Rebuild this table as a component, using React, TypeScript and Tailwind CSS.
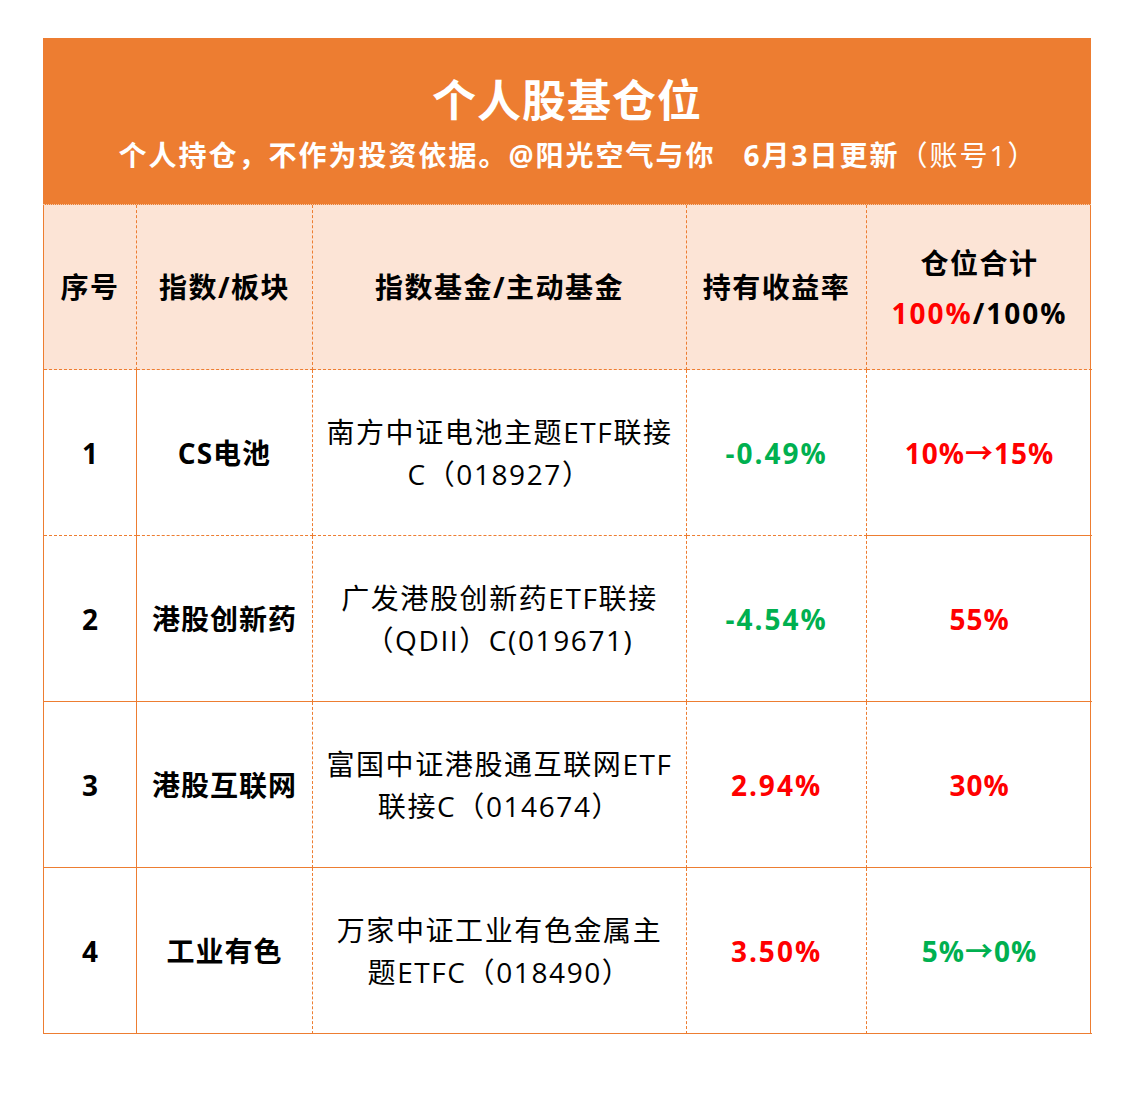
const font = { fontFamily: '"Open Sans", "Noto Sans CJK SC", sans-serif' };

const cols = "grid grid-cols-[93px_176px_374px_180px_225px]";

type Row = {
  no: string;
  sector: string;
  fund: [string, string];
  ret: string;
  retColor: string;
  pos: string;
  posColor: string;
  dashedBottom?: boolean;
};

const rows: Row[] = [
  {
    no: "1",
    sector: "CS电池",
    fund: ["南方中证电池主题ETF联接", "C（018927）"],
    ret: "-0.49%",
    retColor: "text-[#00b050]",
    pos: "10%→15%",
    posColor: "text-[#ff0000]",
    dashedBottom: true,
  },
  {
    no: "2",
    sector: "港股创新药",
    fund: ["广发港股创新药ETF联接", "（QDII）C(019671)"],
    ret: "-4.54%",
    retColor: "text-[#00b050]",
    pos: "55%",
    posColor: "text-[#ff0000]",
  },
  {
    no: "3",
    sector: "港股互联网",
    fund: ["富国中证港股通互联网ETF", "联接C（014674）"],
    ret: "2.94%",
    retColor: "text-[#ff0000]",
    pos: "30%",
    posColor: "text-[#ff0000]",
  },
  {
    no: "4",
    sector: "工业有色",
    fund: ["万家中证工业有色金属主", "题ETFC（018490）"],
    ret: "3.50%",
    retColor: "text-[#ff0000]",
    pos: "5%→0%",
    posColor: "text-[#00b050]",
  },
];

export default function App() {
  return (
    <div className="min-h-screen bg-white pt-[38px] pl-[43px]" style={font}>
      <div className="w-[1048px]">
        {/* Title block */}
        <div className="h-[167px] bg-[#ed7d31] flex flex-col items-center text-white font-bold border-b border-dotted border-[#f6c9a8]">
          <div className="text-[44px] leading-none mt-[40px] tracking-[1px]">个人股基仓位</div>
          <div className="text-[28px] leading-none mt-[19px] pl-[22px] whitespace-pre tracking-[2px]">
            个人持仓，不作为投资依据。@阳光空气与你{"   "}6月3日更新<span className="font-normal">（账号1）</span>
          </div>
        </div>

        {/* Header row */}
        <div className={`${cols} h-[165px] bg-[#fce4d6] border-l border-r border-[#ed7d31] text-[28px] font-bold text-black tracking-[1.5px]`}>
          <div className="flex items-center justify-center border-r border-b border-dashed border-[#ed7d31]">序号</div>
          <div className="flex items-center justify-center border-r border-b border-dashed border-[#ed7d31]">指数/板块</div>
          <div className="flex items-center justify-center border-r border-b border-dashed border-[#ed7d31]">指数基金/主动基金</div>
          <div className="flex items-center justify-center border-r border-b border-dashed border-[#ed7d31]">持有收益率</div>
          <div className="flex flex-col items-center justify-center border-b border-dashed border-[#ed7d31] leading-[50px] pt-[2px]">
            <div>仓位合计</div>
            <div className="tracking-[2px]">
              <span className="text-[#ff0000]">100%</span>/100%
            </div>
          </div>
        </div>

        {/* Body rows */}
        {rows.map((r) => {
          const mid = r.dashedBottom ? "border-dashed" : "[border-right-style:dashed] [border-bottom-style:solid]";
          return (
            <div key={r.no} className={`${cols} h-[166px] border-l border-r border-[#ed7d31] text-[28px] text-black`}>
              <div className={`flex items-center justify-center font-bold border-r border-b border-[#ed7d31] ${r.dashedBottom ? "[border-right-style:solid] [border-bottom-style:dashed]" : "border-solid"}`}>
                {r.no}
              </div>
              <div className={`flex items-center justify-center font-bold tracking-[1px] border-r border-b border-[#ed7d31] ${mid}`}>
                {r.sector}
              </div>
              <div className={`flex flex-col items-center justify-center leading-[42px] tracking-[1.6px] border-r border-b border-[#ed7d31] ${mid}`}>
                <div>{r.fund[0]}</div>
                <div>{r.fund[1]}</div>
              </div>
              <div className={`flex items-center justify-center font-bold tracking-[2px] ${r.retColor} border-r border-b border-[#ed7d31] ${mid}`}>
                {r.ret}
              </div>
              <div className={`flex items-center justify-center font-bold tracking-[1px] ${r.posColor} border-b border-solid border-[#ed7d31]`}>
                {r.pos}
              </div>
            </div>
          );
        })}
      </div>
    </div>
  );
}
